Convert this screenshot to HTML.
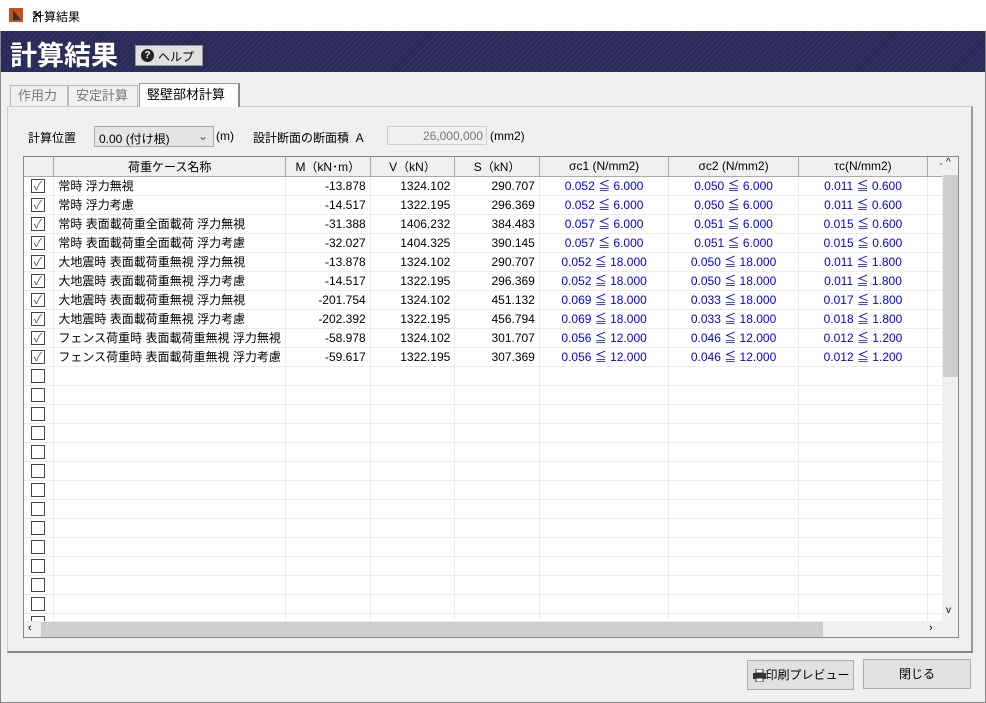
<!DOCTYPE html>
<html><head><meta charset="utf-8"><style>
*{box-sizing:border-box;margin:0;padding:0}
body{width:986px;height:703px;background:#f0f0f0;font-family:"Liberation Sans","Noto Sans CJK JP",sans-serif;font-size:12px;color:#000;position:relative;overflow:hidden}
.win{position:absolute;left:0;top:0;width:986px;height:703px;border:1px solid #888;border-top:none}
.title{position:absolute;left:0;top:0;width:986px;height:31px;background:#fff;}
.title span{position:absolute;left:32px;top:8px;font-size:12px}
.close{position:absolute;left:962px;top:5px;font-size:18px}
.band{position:absolute;left:1px;top:31px;width:984px;height:41px;background:repeating-linear-gradient(135deg,#2b2a55 0 3px,#35346a 3px 4px);}
.band h1{position:absolute;left:9px;top:3px;color:#fff;font-size:27px;font-weight:bold;letter-spacing:0}
.help{position:absolute;left:134px;top:14px;width:68px;height:21px;background:#e1e1e1;border:1px solid #999;font-size:12px}
.help i{position:absolute;left:5px;top:3px;width:13px;height:13px;border-radius:50%;background:#222;color:#fff;font-style:normal;font-size:10px;font-weight:bold;text-align:center;line-height:13px}
.help span{position:absolute;left:22px;top:2px}
.tab{position:absolute;top:85px;height:22px;border:1px solid #bbb;border-bottom:none;color:#777;font-size:13px;padding:0 0 0 7px;line-height:20px;background:#f0f0f0}
.tab.on{top:83px;height:24px;background:#fff;color:#000;border-color:#999;border-right:2px solid #888;z-index:2;line-height:22px}
.panel{position:absolute;left:7px;top:106px;width:966px;height:547px;border:1px solid #ccc;border-right:2px solid #999;border-bottom:2px solid #888}
.lbl{position:absolute;font-size:12px}
.combo{position:absolute;left:94px;top:126px;width:120px;height:21px;border:1px solid #aaa;background:#e5e5e5;padding:3px 0 0 4px;font-size:12px}
.combo b{position:absolute;right:5px;top:2px;font-weight:normal;color:#555}
.area{position:absolute;left:387px;top:126px;width:100px;height:19px;border:1px solid #ccc;background:#f0f0f0;color:#777;text-align:right;padding:2px 3px 0 0}
.grid{position:absolute;left:23px;top:156px;width:936px;height:482px;border:1px solid #888;background:#fff;overflow:hidden}
table{border-collapse:collapse;table-layout:fixed;position:absolute;left:0;top:0}
td,th{height:19px;border-right:1px solid #ececec;border-bottom:1px solid #ececec;white-space:nowrap;overflow:hidden;font-weight:normal;font-size:12px;padding:0 4px}
th{background:#f0f0f0;border-right:1px solid #aaa;border-bottom:1px solid #aaa;text-align:center}
td.n{text-align:right}
td.b{text-align:center;color:#0000ee}
.cb{display:block;width:14px;height:14px;border:1px solid #444;margin-left:3px;font-size:12px;line-height:12px;text-align:center;color:#555}
.vs{position:absolute;left:918px;top:0;width:17px;height:464px;background:#f0f0f0}
.vs .th{position:absolute;left:1px;top:18px;width:15px;height:202px;background:#cdcdcd}
.hs{position:absolute;left:0;top:464px;width:935px;height:17px;background:#f0f0f0}
.hs .th{position:absolute;left:17px;top:1px;width:782px;height:15px;background:#cdcdcd}
.btn{position:absolute;height:30px;background:#e1e1e1;border:1px solid #adadad;font-size:12px;text-align:center;line-height:28px}
</style></head><body>
<div class="win"></div>
<div class="title"><svg style="position:absolute;left:9px;top:8px" width="14" height="14"><rect x="0" y="0" width="14" height="14" fill="#c8501e"/><path d="M4 2 L4 12 L12 12 Z" fill="#333"/></svg><span>計算結果</span><span class="close">✕</span></div>
<div class="band"><h1>計算結果</h1><div class="help"><i>?</i><span>ヘルプ</span></div></div>
<div class="tab" style="left:10px;width:58px">作用力</div>
<div class="tab" style="left:68px;width:70px">安定計算</div>
<div class="tab on" style="left:139px;width:101px">竪壁部材計算</div>
<div class="panel"></div>
<div class="lbl" style="left:28px;top:129px">計算位置</div>
<div class="combo">0.00 (付け根)<b>⌄</b></div>
<div class="lbl" style="left:216px;top:129px">(m)</div>
<div class="lbl" style="left:253px;top:129px">設計断面の断面積&nbsp; A</div>
<div class="area">26,000,000</div>
<div class="lbl" style="left:490px;top:129px">(mm2)</div>
<div class="grid">
<table>
<colgroup><col style="width:30px"><col style="width:231px"><col style="width:85px"><col style="width:85px"><col style="width:85px"><col style="width:130px"><col style="width:130px"><col style="width:130px"><col style="width:30px"></colgroup>
<tr><th></th><th>荷重ケース名称</th><th>M（kN･m）</th><th>V（kN）</th><th>S（kN）</th><th>σc1 (N/mm2)</th><th>σc2 (N/mm2)</th><th>τc(N/mm2)</th><th>τ</th></tr>
<tr><td><span class="cb">✓</span></td><td>常時 浮力無視</td><td class="n">-13.878</td><td class="n">1324.102</td><td class="n">290.707</td><td class="b">0.052 ≦ 6.000</td><td class="b">0.050 ≦ 6.000</td><td class="b">0.011 ≦ 0.600</td><td></td></tr>
<tr><td><span class="cb">✓</span></td><td>常時 浮力考慮</td><td class="n">-14.517</td><td class="n">1322.195</td><td class="n">296.369</td><td class="b">0.052 ≦ 6.000</td><td class="b">0.050 ≦ 6.000</td><td class="b">0.011 ≦ 0.600</td><td></td></tr>
<tr><td><span class="cb">✓</span></td><td>常時 表面載荷重全面載荷 浮力無視</td><td class="n">-31.388</td><td class="n">1406.232</td><td class="n">384.483</td><td class="b">0.057 ≦ 6.000</td><td class="b">0.051 ≦ 6.000</td><td class="b">0.015 ≦ 0.600</td><td></td></tr>
<tr><td><span class="cb">✓</span></td><td>常時 表面載荷重全面載荷 浮力考慮</td><td class="n">-32.027</td><td class="n">1404.325</td><td class="n">390.145</td><td class="b">0.057 ≦ 6.000</td><td class="b">0.051 ≦ 6.000</td><td class="b">0.015 ≦ 0.600</td><td></td></tr>
<tr><td><span class="cb">✓</span></td><td>大地震時 表面載荷重無視 浮力無視</td><td class="n">-13.878</td><td class="n">1324.102</td><td class="n">290.707</td><td class="b">0.052 ≦ 18.000</td><td class="b">0.050 ≦ 18.000</td><td class="b">0.011 ≦ 1.800</td><td></td></tr>
<tr><td><span class="cb">✓</span></td><td>大地震時 表面載荷重無視 浮力考慮</td><td class="n">-14.517</td><td class="n">1322.195</td><td class="n">296.369</td><td class="b">0.052 ≦ 18.000</td><td class="b">0.050 ≦ 18.000</td><td class="b">0.011 ≦ 1.800</td><td></td></tr>
<tr><td><span class="cb">✓</span></td><td>大地震時 表面載荷重無視 浮力無視</td><td class="n">-201.754</td><td class="n">1324.102</td><td class="n">451.132</td><td class="b">0.069 ≦ 18.000</td><td class="b">0.033 ≦ 18.000</td><td class="b">0.017 ≦ 1.800</td><td></td></tr>
<tr><td><span class="cb">✓</span></td><td>大地震時 表面載荷重無視 浮力考慮</td><td class="n">-202.392</td><td class="n">1322.195</td><td class="n">456.794</td><td class="b">0.069 ≦ 18.000</td><td class="b">0.033 ≦ 18.000</td><td class="b">0.018 ≦ 1.800</td><td></td></tr>
<tr><td><span class="cb">✓</span></td><td>フェンス荷重時 表面載荷重無視 浮力無視</td><td class="n">-58.978</td><td class="n">1324.102</td><td class="n">301.707</td><td class="b">0.056 ≦ 12.000</td><td class="b">0.046 ≦ 12.000</td><td class="b">0.012 ≦ 1.200</td><td></td></tr>
<tr><td><span class="cb">✓</span></td><td>フェンス荷重時 表面載荷重無視 浮力考慮</td><td class="n">-59.617</td><td class="n">1322.195</td><td class="n">307.369</td><td class="b">0.056 ≦ 12.000</td><td class="b">0.046 ≦ 12.000</td><td class="b">0.012 ≦ 1.200</td><td></td></tr>
<tr><td><span class="cb"></span></td><td></td><td></td><td></td><td></td><td></td><td></td><td></td><td></td></tr>
<tr><td><span class="cb"></span></td><td></td><td></td><td></td><td></td><td></td><td></td><td></td><td></td></tr>
<tr><td><span class="cb"></span></td><td></td><td></td><td></td><td></td><td></td><td></td><td></td><td></td></tr>
<tr><td><span class="cb"></span></td><td></td><td></td><td></td><td></td><td></td><td></td><td></td><td></td></tr>
<tr><td><span class="cb"></span></td><td></td><td></td><td></td><td></td><td></td><td></td><td></td><td></td></tr>
<tr><td><span class="cb"></span></td><td></td><td></td><td></td><td></td><td></td><td></td><td></td><td></td></tr>
<tr><td><span class="cb"></span></td><td></td><td></td><td></td><td></td><td></td><td></td><td></td><td></td></tr>
<tr><td><span class="cb"></span></td><td></td><td></td><td></td><td></td><td></td><td></td><td></td><td></td></tr>
<tr><td><span class="cb"></span></td><td></td><td></td><td></td><td></td><td></td><td></td><td></td><td></td></tr>
<tr><td><span class="cb"></span></td><td></td><td></td><td></td><td></td><td></td><td></td><td></td><td></td></tr>
<tr><td><span class="cb"></span></td><td></td><td></td><td></td><td></td><td></td><td></td><td></td><td></td></tr>
<tr><td><span class="cb"></span></td><td></td><td></td><td></td><td></td><td></td><td></td><td></td><td></td></tr>
<tr><td><span class="cb"></span></td><td></td><td></td><td></td><td></td><td></td><td></td><td></td><td></td></tr>
<tr><td><span class="cb"></span></td><td></td><td></td><td></td><td></td><td></td><td></td><td></td><td></td></tr>
<tr><td><span class="cb"></span></td><td></td><td></td><td></td><td></td><td></td><td></td><td></td><td></td></tr>
</table>
<div class="vs"><span style="position:absolute;left:4px;top:0;font-size:10px">^</span><div class="th"></div><span style="position:absolute;left:4px;top:448px;font-size:10px">v</span></div>
<div class="hs"><span style="position:absolute;left:4px;top:1px;font-size:11px">‹</span><div class="th"></div><span style="position:absolute;left:905px;top:1px;font-size:11px">›</span></div>
</div>
<div class="btn" style="left:747px;top:660px;width:107px"><svg style="position:absolute;left:5px;top:8px" width="13" height="13"><rect x="3" y="0" width="7" height="4" fill="#fff" stroke="#333"/><rect x="0" y="4" width="13" height="6" fill="#333"/><rect x="3" y="9" width="7" height="4" fill="#fff" stroke="#333"/></svg><span style="margin-left:14px">印刷プレビュー</span></div>
<div class="btn" style="left:863px;top:659px;width:108px">閉じる</div>
</body></html>
